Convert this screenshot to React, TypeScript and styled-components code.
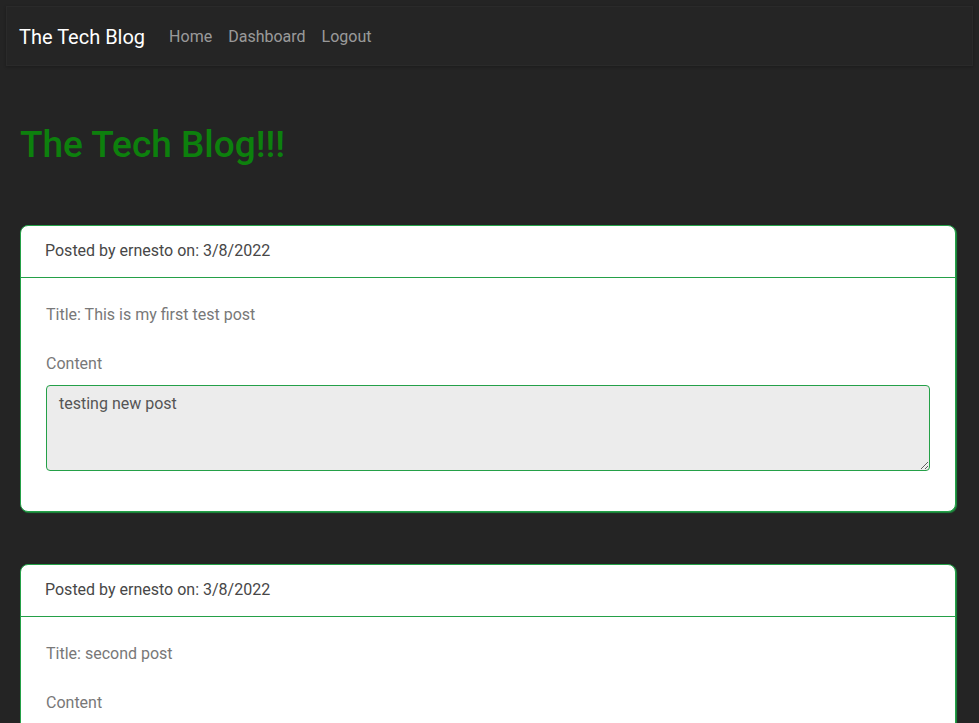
import * as React from 'react';
import styled, { createGlobalStyle } from 'styled-components';

interface Post {
  author: string;
  date: string;
  title: string;
  content: string;
}

const posts: Post[] = [
  { author: 'ernesto', date: '3/8/2022', title: 'This is my first test post', content: 'testing new post' },
  { author: 'ernesto', date: '3/8/2022', title: 'second post', content: 'second post content' },
];

const GlobalStyle = createGlobalStyle`
  body {
    margin: 0;
    background-color: #242424;
    font-family: Roboto, "Liberation Sans", sans-serif;
    font-size: 16px;
    line-height: 1.5;
  }
  * {
    box-sizing: border-box;
  }
`;

const NavBar = styled.nav`
  margin: 6px;
  height: 60px;
  padding: 2px 12px 0;
  display: flex;
  align-items: center;
  background-color: #252525;
  border: 1px solid #2a2a2a;
  box-shadow: 0 1px 3px rgba(0, 0, 0, 0.25);
`;

const Brand = styled.a`
  color: #ffffff;
  font-size: 20px;
  margin-right: 16px;
  text-decoration: none;
`;

const NavLink = styled.a`
  color: rgba(255, 255, 255, 0.55);
  padding: 0 8px;
  text-decoration: none;
`;

const Main = styled.main`
  padding: 51px 23px 0 20px;
`;

const PageTitle = styled.h1`
  margin: 0 0 58px;
  color: #0d800d;
  font-size: 37px;
  font-weight: 500;
  line-height: 1.2;
`;

const PostList = styled.div`
  display: flex;
  flex-direction: column;
  gap: 52px;
`;

const Card = styled.section`
  background: #ffffff;
  border: 1px solid #24a048;
  border-radius: 8px;
  box-shadow: 1px 1px 1px #1c8a3c;
  overflow: hidden;
`;

const CardHeader = styled.header`
  padding: 13px 24px 14px;
  color: #474747;
  border-bottom: 1px solid #24a048;
`;

const CardBody = styled.div`
  padding: 25px 25px 40px;
`;

const PostTitle = styled.p`
  margin: 0 0 25px;
  color: #787878;
`;

const Label = styled.label`
  display: block;
  margin-bottom: 9px;
  color: #787878;
`;

const ContentBox = styled.textarea`
  display: block;
  width: 100%;
  height: 86px;
  padding: 6px 12px;
  font: inherit;
  color: #555555;
  background-color: #ececec;
  border: 1px solid #24a048;
  border-radius: 4px;
  outline: none;
`;

const PostCard = ({ post }: { post: Post }) => (
  <Card>
    <CardHeader>
      Posted by {post.author} on: {post.date}
    </CardHeader>
    <CardBody>
      <PostTitle>Title: {post.title}</PostTitle>
      <Label>Content</Label>
      <ContentBox readOnly value={post.content} />
    </CardBody>
  </Card>
);

export default function App() {
  return (
    <>
      <GlobalStyle />
      <NavBar>
        <Brand href="#">The Tech Blog</Brand>
        <NavLink href="#">Home</NavLink>
        <NavLink href="#">Dashboard</NavLink>
        <NavLink href="#">Logout</NavLink>
      </NavBar>
      <Main>
        <PageTitle>The Tech Blog!!!</PageTitle>
        <PostList>
          {posts.map((post, i) => (
            <PostCard key={i} post={post} />
          ))}
        </PostList>
      </Main>
    </>
  );
}
